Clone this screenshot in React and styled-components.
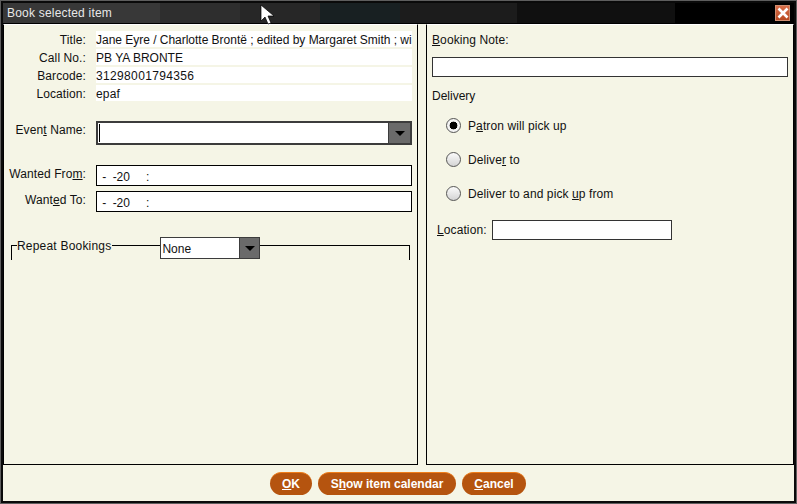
import React from "react"
import styled, { createGlobalStyle } from "styled-components"

const GlobalStyle = createGlobalStyle`
    html, body {
        margin: 0;
        padding: 0;
        background: #000;
    }
    body {
        font-family: "Liberation Sans", Arial, sans-serif;
        font-size: 12px;
        color: #111;
    }
`

const infoRows = [
    { label: "Title:", value: "Jane Eyre / Charlotte Brontë ; edited by Margaret Smith ; wi", spacing: -0.02 },
    { label: "Call No.:", value: "PB YA BRONTE", spacing: 0 },
    { label: "Barcode:", value: "31298001794356", spacing: 0.35 },
    { label: "Location:", value: "epaf", spacing: 0.2 },
]

const deliveryOptions = [
    { before: "P", key: "a", after: "tron will pick up", checked: true },
    { before: "Delive", key: "r", after: " to" },
    { before: "Deliver to and pick ", key: "u", after: "p from" },
]

const ArrowDown = () => (
    <svg width="10" height="5" viewBox="0 0 10 5">
        <path d="M0 0h10L5 5z" fill="#000" />
    </svg>
)

const App = () => {
    return (
        <Win>
            <GlobalStyle />
            <TitleBar>
                <TitleText>Book selected item</TitleText>
                <CloseBtn>
                    <svg width="12" height="12" viewBox="0 0 12 12">
                        <path d="M1.5 1.5l9 9M10.5 1.5l-9 9" stroke="#fff" strokeWidth="2.6" />
                    </svg>
                </CloseBtn>
                <Cursor width="16" height="23" viewBox="0 0 16 23">
                    <path d="M1 1v16l4-4 3 7 3-1-3-7h6z" fill="#fff" stroke="#000" strokeWidth="0.7" />
                </Cursor>
            </TitleBar>
            <Body>
                <LeftPanel>
                    <InfoList>
                        {infoRows.map((row) => (
                            <InfoRow key={row.label}>
                                <FieldLabel>{row.label}</FieldLabel>
                                <InfoValue $spacing={row.spacing}>{row.value}</InfoValue>
                            </InfoRow>
                        ))}
                    </InfoList>
                    <EventRow>
                        <FieldLabel>Even<u>t</u> Name:</FieldLabel>
                        <EventCombo>
                            <Caret />
                            <ComboArrow $width={22}><ArrowDown /></ComboArrow>
                        </EventCombo>
                    </EventRow>
                    <DateRow>
                        <FieldLabel>Wanted Fro<u>m</u>:</FieldLabel>
                        <DateField>&nbsp;-&nbsp;&nbsp;-20&nbsp;&nbsp;&nbsp;&nbsp;&nbsp;:</DateField>
                    </DateRow>
                    <DateRow $second>
                        <FieldLabel>Want<u>e</u>d To:</FieldLabel>
                        <DateField>&nbsp;-&nbsp;&nbsp;-20&nbsp;&nbsp;&nbsp;&nbsp;&nbsp;:</DateField>
                    </DateRow>
                    <RepeatFrame>
                        <RepeatHeader>
                            <RepeatLabel>Repeat Bookings</RepeatLabel>
                            <RepeatSelect>
                                <SelectText>None</SelectText>
                                <ComboArrow $width={20}><ArrowDown /></ComboArrow>
                            </RepeatSelect>
                        </RepeatHeader>
                    </RepeatFrame>
                </LeftPanel>
                <RightPanel>
                    <NoteLabel><u>B</u>ooking Note:</NoteLabel>
                    <NoteInput />
                    <DeliveryTitle>Delivery</DeliveryTitle>
                    <RadioList>
                        {deliveryOptions.map((opt) => (
                            <RadioRow key={opt.before}>
                                <Radio $checked={opt.checked} />
                                <span>{opt.before}<u>{opt.key}</u>{opt.after}</span>
                            </RadioRow>
                        ))}
                    </RadioList>
                    <LocationRow>
                        <LocationLabel><u>L</u>ocation:</LocationLabel>
                        <LocationInput />
                    </LocationRow>
                </RightPanel>
            </Body>
            <Footer>
                <ActionBtn $width={42}><u>O</u>K</ActionBtn>
                <ActionBtn $width={138}>S<u>h</u>ow item calendar</ActionBtn>
                <ActionBtn $width={64}><u>C</u>ancel</ActionBtn>
            </Footer>
        </Win>
    )
}

const cream = "#f5f5e6"

const Win = styled.div`
    position: relative;
    width: 797px;
    height: 504px;
    box-sizing: border-box;
    border: 1px solid #5e5e5e;
    outline: 2px solid #0a0a0a;
    outline-offset: -3px;
    padding: 2px;
    display: flex;
    flex-direction: column;
    overflow: hidden;
    background: ${cream};
`
const TitleBar = styled.div`
    position: relative;
    flex: none;
    height: 20px;
    display: flex;
    align-items: center;
    justify-content: space-between;
    background: linear-gradient(
        to right,
        #383838 0 157px,
        #2e2e2e 157px 237px,
        #272727 237px 317px,
        #182022 317px 397px,
        #1c1c1c 397px 514px,
        #101010 514px 672px,
        #000 672px
    );
`
const TitleText = styled.div`
    margin-left: 4px;
    color: #e8e8e8;
    font-size: 12px;
    letter-spacing: 0.2px;
`
const CloseBtn = styled.div`
    width: 15px;
    height: 16px;
    margin-right: 4px;
    display: flex;
    align-items: center;
    justify-content: center;
    box-sizing: border-box;
    border: 1px solid #cf8f72;
    background: linear-gradient(#d96f4a, #b84a22);
`
const Cursor = styled.svg`
    position: absolute;
    left: 257px;
    top: 1px;
`
const Body = styled.div`
    flex: none;
    height: 442px;
    box-sizing: border-box;
    display: flex;
    justify-content: space-between;
    background: ${cream};
    border-top: 1px solid #000;
`
const Panel = styled.div`
    box-sizing: border-box;
    height: 100%;
    background: ${cream};
    border-top: 1px solid #fff;
    border-bottom: 1px solid #000;
    border-left: 1px solid #000;
    border-right: 1px solid #000;
    display: flex;
    flex-direction: column;
`
const LeftPanel = styled(Panel)`
    width: 415px;
    padding: 6px 5px 0 5px;
`
const RightPanel = styled(Panel)`
    width: 368px;
    padding: 7px 5px 0 5px;
`
const InfoList = styled.div`
    display: flex;
    flex-direction: column;
    gap: 2px;
`
const FieldRow = styled.div`
    display: grid;
    grid-template-columns: 77px 1fr;
    column-gap: 10px;
`
const InfoRow = styled(FieldRow)`
    height: 16px;
    line-height: 18px;
`
const FieldLabel = styled.div`
    text-align: right;
    white-space: nowrap;
    letter-spacing: 0.1px;
`
const InfoValue = styled.div`
    height: 16px;
    background: #fff;
    white-space: nowrap;
    overflow: hidden;
    letter-spacing: ${(p) => p.$spacing}px;
`
const EventRow = styled(FieldRow)`
    margin-top: 20px;
    line-height: 18px;
`
const EventCombo = styled.div`
    height: 24px;
    box-sizing: border-box;
    border: 2px solid #3c3c3c;
    background: #fff;
    display: flex;
    justify-content: space-between;
    align-items: stretch;
    padding-left: 1px;
`
const Caret = styled.div`
    width: 1px;
    margin: 1px 0;
    background: #000;
`
const ComboArrow = styled.div`
    width: ${(p) => p.$width}px;
    background: #6a6a6a;
    border-left: 1px solid #3c3c3c;
    box-sizing: border-box;
    display: flex;
    align-items: center;
    justify-content: center;
`
const DateRow = styled(FieldRow)`
    margin-top: ${(p) => (p.$second ? "5px" : "20px")};
    line-height: 18px;
`
const DateField = styled.div`
    height: 21px;
    line-height: 22px;
    box-sizing: border-box;
    border: 1px solid #000;
    background: #fff;
    padding-left: 2px;
    letter-spacing: -0.08px;
`
const RepeatFrame = styled.div`
    box-sizing: border-box;
    width: 399px;
    height: 15px;
    margin: 33px 0 0 2px;
    border: 1px solid #000;
    border-bottom: none;
`
const RepeatHeader = styled.div`
    display: flex;
    align-items: flex-start;
    margin-top: -9px;
`
const RepeatLabel = styled.div`
    margin-left: 5px;
    padding: 0 1px 0 0;
    line-height: 18px;
    height: 16px;
    background: ${cream};
    letter-spacing: 0.2px;
`
const RepeatSelect = styled.div`
    margin-left: 48px;
    width: 100px;
    height: 22px;
    box-sizing: border-box;
    border: 1px solid #3c3c3c;
    background: #fff;
    display: flex;
    justify-content: space-between;
`
const SelectText = styled.div`
    line-height: 22px;
    padding-left: 1px;
`
const NoteLabel = styled.div`
    line-height: 16px;
    letter-spacing: 0.1px;
`
const NoteInput = styled.div`
    height: 20px;
    margin-top: 9px;
    box-sizing: border-box;
    border: 1px solid #333;
    background: #fff;
`
const DeliveryTitle = styled.div`
    margin-top: 11px;
    line-height: 16px;
`
const RadioList = styled.div`
    margin: 14px 0 0 14px;
    letter-spacing: 0.1px;
    display: flex;
    flex-direction: column;
    gap: 19px;
`
const RadioRow = styled.div`
    display: flex;
    align-items: center;
    gap: 7px;
    height: 15px;
`
const Radio = styled.div`
    width: 15px;
    height: 15px;
    box-sizing: border-box;
    border: 1px solid #555;
    border-radius: 50%;
    background: ${(p) =>
        p.$checked
            ? "radial-gradient(circle, #000 0 3.6px, #f4f4f4 4.2px)"
            : "linear-gradient(#fbfbfb, #d4d4d4)"};
`
const LocationRow = styled.div`
    display: flex;
    align-items: center;
    margin: 19px 0 0 5px;
`
const LocationLabel = styled.span`
    width: 55px;
    letter-spacing: 0.1px;
`
const LocationInput = styled.div`
    width: 180px;
    height: 20px;
    box-sizing: border-box;
    border: 1px solid #333;
    background: #fff;
`
const Footer = styled.div`
    flex: 1;
    display: flex;
    justify-content: center;
    align-items: flex-start;
    gap: 6px;
    padding: 7px 1px 0 0;
    background: ${cream};
`
const ActionBtn = styled.div`
    width: ${(p) => p.$width}px;
    height: 23px;
    box-sizing: border-box;
    text-align: center;
    line-height: 22px;
    border-radius: 12px;
    border-top: 1px solid #f07d18;
    background: #b5540f;
    color: #fff;
    font-weight: bold;
    font-size: 12px;
    white-space: nowrap;
`

export default App
